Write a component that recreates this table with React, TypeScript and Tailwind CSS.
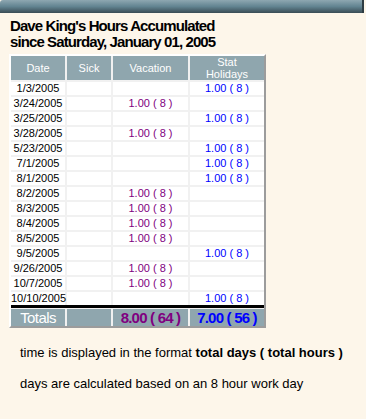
import React from 'react';

type Row = { date: string; vacation?: boolean; stat?: boolean };

const rows: Row[] = [
  { date: '1/3/2005', stat: true },
  { date: '3/24/2005', vacation: true },
  { date: '3/25/2005', stat: true },
  { date: '3/28/2005', vacation: true },
  { date: '5/23/2005', stat: true },
  { date: '7/1/2005', stat: true },
  { date: '8/1/2005', stat: true },
  { date: '8/2/2005', vacation: true },
  { date: '8/3/2005', vacation: true },
  { date: '8/4/2005', vacation: true },
  { date: '8/5/2005', vacation: true },
  { date: '9/5/2005', stat: true },
  { date: '9/26/2005', vacation: true },
  { date: '10/7/2005', vacation: true },
  { date: '10/10/2005', stat: true },
];

const cols = 'grid grid-cols-[54px_44px_75px_74px] gap-x-[2px]';

const App: React.FC = () => {
  return (
    <div className="w-[366px] h-[419px] bg-[#fdf6ea] font-['Liberation_Sans',Arial,sans-serif] text-black overflow-hidden">
      <div className="h-[13px] w-[364px] rounded-tl-[3px] border-r-2 border-[#2e3c43] bg-gradient-to-b from-[#8ea7b1] via-[#628491] to-[#3a4c55]" />

      <h1 className="ml-[10px] mt-[5px] text-[15px] leading-[16px] font-bold tracking-[-0.9px]">
        Dave King's Hours Accumulated
        <br />
        since Saturday, January 01, 2005
      </h1>

      <div className="ml-[9px] mt-[4px] w-[257px] border-2 border-t-white border-l-white border-r-[#9c9c9c] border-b-[#9c9c9c] bg-[#f1f1f1]">
        <div className={`${cols} h-[24px] text-[11px] leading-[11px] text-white`}>
          <div className="bg-[#8fa6ae] flex items-center justify-center">Date</div>
          <div className="bg-[#8fa6ae] flex items-center justify-center">Sick</div>
          <div className="bg-[#8fa6ae] flex items-center justify-center">Vacation</div>
          <div className="bg-[#8fa6ae] flex flex-col items-center justify-center text-center">
            <span>Stat</span>
            <span className="mt-[1px]">Holidays</span>
          </div>
        </div>

        {rows.map((r) => (
          <div key={r.date} className={`${cols} mt-[2px] h-[13px] text-[11px] leading-[13px]`}>
            <div className="bg-white text-center">{r.date}</div>
            <div className="bg-white" />
            <div className="bg-white text-center text-[#800080]">{r.vacation ? '1.00 ( 8 )' : ''}</div>
            <div className="bg-white text-center text-[#0000ff]">{r.stat ? '1.00 ( 8 )' : ''}</div>
          </div>
        ))}

        <div className="h-[3px] bg-black" />

        <div className={`${cols} mt-[1px] h-[17px] leading-[17px]`}>
          <div className="bg-[#8fa6ae] text-center text-[15px] text-white tracking-[-0.6px]">Totals</div>
          <div className="bg-[#8fa6ae]" />
          <div className="bg-[#8fa6ae] text-center text-[15px] font-bold text-[#800080] tracking-[-0.8px]">8.00 ( 64 )</div>
          <div className="bg-[#8fa6ae] text-center text-[15px] font-bold text-[#0000ff] tracking-[-0.8px]">7.00 ( 56 )</div>
        </div>
      </div>

      <div className="ml-[20px] mt-[17px] text-[13px] leading-[15px]">
        time is displayed in the format <b>total days ( total hours )</b>
      </div>
      <div className="ml-[20px] mt-[16px] text-[13px] leading-[15px]">
        days are calculated based on an 8 hour work day
      </div>
    </div>
  );
};

export default App;
